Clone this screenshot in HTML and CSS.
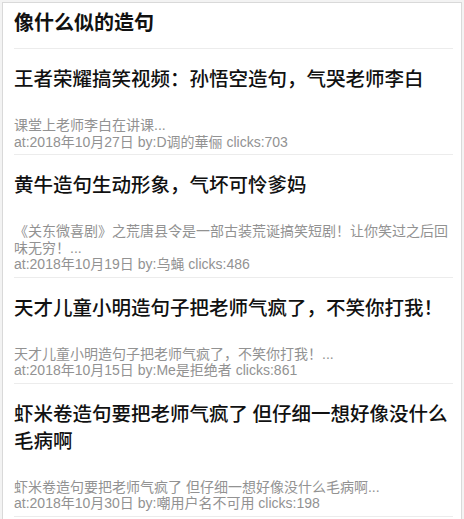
FILE: index.html
```html
<!DOCTYPE html>
<html lang="zh-CN">
<head>
<meta charset="utf-8">
<title>像什么似的造句</title>
<link rel="stylesheet" href="styles.css">
</head>
<body>
<div class="card">
  <h1 class="page-title">像什么似的造句</h1>
  <ul class="list">
    <li class="item">
      <h2 class="item-title">王者荣耀搞笑视频：孙悟空造句，气哭老师李白</h2>
      <p class="item-desc">课堂上老师李白在讲课...</p>
      <p class="item-meta">at:2018年10月27日 by:D调的華俪 clicks:703</p>
    </li>
    <li class="item">
      <h2 class="item-title">黄牛造句生动形象，气坏可怜爹妈</h2>
      <p class="item-desc">《关东微喜剧》之荒唐县令是一部古装荒诞搞笑短剧！让你笑过之后回味无穷！...</p>
      <p class="item-meta">at:2018年10月19日 by:乌蝇 clicks:486</p>
    </li>
    <li class="item">
      <h2 class="item-title">天才儿童小明造句子把老师气疯了，不笑你打我！</h2>
      <p class="item-desc">天才儿童小明造句子把老师气疯了，不笑你打我！...</p>
      <p class="item-meta">at:2018年10月15日 by:Me是拒绝者 clicks:861</p>
    </li>
    <li class="item">
      <h2 class="item-title">虾米卷造句要把老师气疯了 但仔细一想好像没什么毛病啊</h2>
      <p class="item-desc">虾米卷造句要把老师气疯了 但仔细一想好像没什么毛病啊...</p>
      <p class="item-meta">at:2018年10月30日 by:嘲用户名不可用 clicks:198</p>
    </li>
  </ul>
</div>
</body>
</html>
```
FILE: styles.css
```css
html, body {
  margin: 0;
  padding: 0;
}
body {
  background: #f3f3f3;
  font-family: "Liberation Sans", "Noto Sans CJK SC", sans-serif;
  color: #1a1a1a;
}
.card {
  margin: 2px 2px 0 2px;
  border: 1px solid #d9d9d9;
  border-bottom: none;
  background: #fff;
  padding: 0 8px 0 11px;
  min-height: 520px;
}
.page-title {
  margin: 0;
  padding: 5px 0 12px;
  font-family: "Noto Sans CJK SC", sans-serif;
  font-size: 20px;
  line-height: 28px;
  font-weight: 700;
  color: #111;
  border-bottom: 1px solid #ececec;
}
.list {
  list-style: none;
  margin: 0;
  padding: 0;
}
.item {
  padding: 15px 0 4px;
  border-bottom: 1px solid #ececec;
}
.item-title {
  margin: 0;
  font-family: "Noto Sans CJK SC", sans-serif;
  font-size: 19.5px;
  line-height: 27px;
  font-weight: 500;
  color: #111;
}
.item-desc {
  margin: 26px 0 0;
  font-size: 14px;
  line-height: 16.5px;
  color: #929292;
}
.item-meta {
  margin: 0;
  font-size: 14px;
  line-height: 16.5px;
  color: #929292;
}
```
